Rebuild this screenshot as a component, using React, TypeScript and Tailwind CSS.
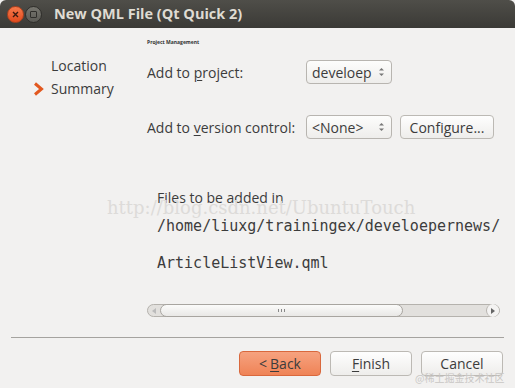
import React from 'react';

const ui = { fontFamily: '"Open Sans", "Noto Sans", sans-serif' };
const mono = { fontFamily: '"DejaVu Sans Mono", "Liberation Mono", monospace' };

const Spin: React.FC = () => (
  <svg width="7" height="12" viewBox="0 0 7 12" className="text-[#777]">
    <path d="M1 4.5 L3.5 2 L6 4.5 Z" fill="currentColor" />
    <path d="M1 7.5 L3.5 10 L6 7.5 Z" fill="currentColor" />
  </svg>
);

const Combo: React.FC<{ label: string }> = ({ label }) => (
  <div className="flex h-[24px] w-[86px] items-center justify-between rounded-[4px] border border-[#b8b5b0] bg-gradient-to-b from-[#fdfdfc] to-[#eeedeb] pl-[5px] pr-[6px] text-[14px] text-[#3c3c3c]">
    <span>{label}</span>
    <Spin />
  </div>
);

const Btn: React.FC<{ children: React.ReactNode; primary?: boolean }> = ({ children, primary }) => (
  <div
    className={
      primary
        ? 'flex h-[25px] w-[82px] items-center justify-center rounded-[4px] border border-[#d9683d] bg-gradient-to-b from-[#f6a27f] to-[#ef8356] text-[14px] text-[#3c3c3c]'
        : 'flex h-[25px] w-[82px] items-center justify-center rounded-[4px] border border-[#bcb9b4] bg-gradient-to-b from-[#fefefe] to-[#eeedeb] text-[14px] text-[#3c3c3c]'
    }
  >
    {children}
  </div>
);

export default function App() {
  return (
    <div className="relative h-[388px] w-[515px] overflow-hidden bg-[#f2f1f0] text-[#3c3c3c]" style={ui}>
      {/* title bar */}
      <div className="flex h-[28px] items-center rounded-t-[6px] bg-gradient-to-b from-[#4f4e49] to-[#3b3a36] pl-[7px]">
        <div className="flex h-[17px] w-[17px] items-center justify-center rounded-full border border-[#b2411d] bg-gradient-to-b from-[#f6794a] to-[#e2491b]">
          <svg width="7" height="7" viewBox="0 0 7 7">
            <path d="M1 1 L6 6 M6 1 L1 6" stroke="#3a1a10" strokeWidth="1.4" />
          </svg>
        </div>
        <div className="ml-[1px] flex h-[17px] w-[17px] items-center justify-center rounded-full border border-[#2f2e2b] bg-gradient-to-b from-[#77766f] to-[#5b5a55]">
          <div className="h-[7px] w-[7px] rounded-[1px] border border-[#2f2e2b]" />
        </div>
        <div className="ml-[12px] text-[14.5px] font-bold text-[#dfdbd2]">New QML File (Qt Quick 2)</div>
      </div>

      <div className="flex">
        {/* sidebar */}
        <div className="w-[147px] shrink-0 pt-[26px] text-[14px]">
          <div className="flex h-[23px] items-center pl-[51px]">Location</div>
          <div className="flex h-[23px] items-center pl-[33px]">
            <svg width="11" height="14" viewBox="0 0 11 14" className="mr-[7px]">
              <path d="M2 1.5 L8.5 7 L2 12.5" fill="none" stroke="#e2581f" strokeWidth="3" strokeLinejoin="miter" />
            </svg>
            Summary
          </div>
        </div>

        {/* main */}
        <div className="flex-1 pr-[21px]">
          <div className="mt-[11px] text-[5px] font-bold leading-[6px] text-[#333]">Project Management</div>
          <div className="mt-[15px] flex h-[24px] items-center">
            <span className="w-[159px] text-[14px]">
              Add to <span className="underline underline-offset-2">p</span>roject:
            </span>
            <Combo label="develoep" />
          </div>
          <div className="mt-[31px] flex h-[24px] items-center">
            <span className="w-[159px] text-[14px]">
              Add to <span className="underline underline-offset-2">v</span>ersion control:
            </span>
            <Combo label="<None>" />
            <div className="ml-[8px] flex h-[24px] w-[94px] items-center justify-center rounded-[4px] border border-[#bcb9b4] bg-gradient-to-b from-[#fefefe] to-[#eeedeb] text-[14px]">
              Configure...
            </div>
          </div>

          <div className="mt-[50px] overflow-hidden whitespace-nowrap pl-[10px]">
            <div className="text-[14px] leading-[18px]">Files to be added in</div>
            <div className="mt-[10px] text-[15px] leading-[18px]" style={mono}>/home/liuxg/trainingex/develoepernews/</div>
            <div className="mt-[19px] text-[15px] leading-[18px]" style={mono}>ArticleListView.qml</div>
          </div>

          {/* horizontal scrollbar */}
          <div className="mt-[32px] flex h-[13px] items-center rounded-full border border-[#b5b2ad] bg-[#e2e0dd]">
            <div className="flex w-[12px] items-center justify-center">
              <svg width="4" height="6" viewBox="0 0 4 6"><path d="M4 0 L0 3 L4 6 Z" fill="#bbb" /></svg>
            </div>
            <div className="flex h-[13px] w-[243px] items-center justify-center rounded-full border border-[#a8a5a0] bg-gradient-to-b from-[#fbfbfa] to-[#e9e8e6]">
              <div className="flex gap-[2px]">
                <div className="h-[3px] w-[1px] bg-[#888]" />
                <div className="h-[3px] w-[1px] bg-[#888]" />
                <div className="h-[3px] w-[1px] bg-[#888]" />
              </div>
            </div>
            <div className="flex-1" />
            <div className="flex h-[13px] w-[13px] items-center justify-center rounded-full border-l border-[#b5b2ad] bg-[#f4f3f2]">
              <svg width="4" height="6" viewBox="0 0 4 6"><path d="M0 0 L4 3 L0 6 Z" fill="#666" /></svg>
            </div>
          </div>
        </div>
      </div>

      {/* separator */}
      <div className="mx-[11px] mt-[20px] h-[1px] bg-[#a5a39f]" />
      <div className="mr-[12px] mt-[13px] flex justify-end gap-[9px]">
        <Btn primary>
          &lt; <span className="ml-[3px] underline underline-offset-2">B</span>ack
        </Btn>
        <Btn>
          <span className="underline underline-offset-2">F</span>inish
        </Btn>
        <Btn>Cancel</Btn>
      </div>

      {/* watermarks */}
      <div
        className="pointer-events-none absolute left-[107px] top-[194px] text-[18px] text-[#dddbd9]"
        style={{ fontFamily: '"DejaVu Serif", "Liberation Serif", serif' }}
      >
        http://blog.csdn.net/UbuntuTouch
      </div>
      <div
        className="pointer-events-none absolute left-[415px] top-[371px] text-[10px] leading-[14px] text-[#c9c7c5]"
        style={{ fontFamily: '"Noto Sans CJK SC", sans-serif' }}
      >
        @稀土掘金技术社区
      </div>
    </div>
  );
}
